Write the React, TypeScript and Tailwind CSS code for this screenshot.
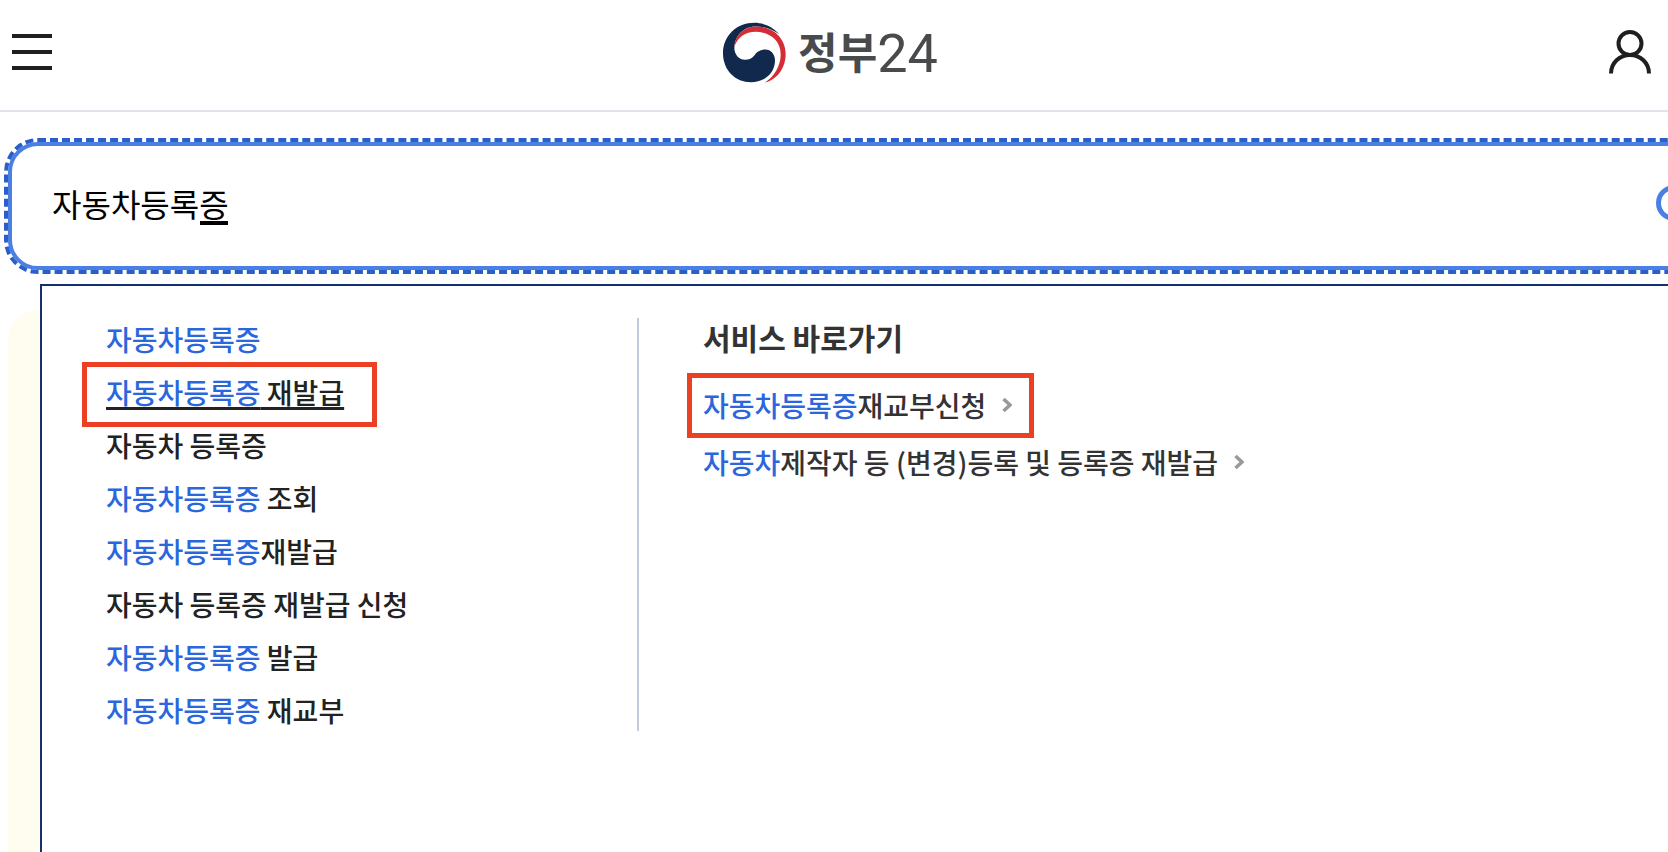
import { useState } from 'react'

type Suggestion = {
  match?: string
  rest: string
  selected?: boolean
}

type Service = {
  match: string
  rest: string
  marked?: boolean
}

const suggestions: Suggestion[] = [
  { match: '자동차등록증', rest: '' },
  { match: '자동차등록증', rest: ' 재발급', selected: true },
  { rest: '자동차 등록증' },
  { match: '자동차등록증', rest: ' 조회' },
  { match: '자동차등록증', rest: '재발급' },
  { rest: '자동차 등록증 재발급 신청' },
  { match: '자동차등록증', rest: ' 발급' },
  { match: '자동차등록증', rest: ' 재교부' },
]

const services: Service[] = [
  { match: '자동차등록증', rest: '재교부신청', marked: true },
  { match: '자동차', rest: '제작자 등 (변경)등록 및 등록증 재발급' },
]

function Emblem() {
  return (
    <svg viewBox="0 0 189 182" className="h-[61px] w-[63px]" aria-hidden>
      <path
        fill="#10294d"
        d="M168 36C150 14 120 2 95 2C40 2 0 42 0 93C0 145 38 180 84 180C128 180 156 150 156 115C156 96 143 82 127 82C112 82 100 90 94 100C88 108 78 113 66 113C48 113 34 98 34 76C36 40 62 13 98 13C128 13 150 22 168 36Z"
      />
      <path
        fill="#d42d35"
        d="M34 76C36 38 64 13 100 13C150 13 188 48 188 95C188 140 160 174 126 181C154 162 173 132 173 96C173 55 140 29 98 29C68 29 42 46 34 76Z"
      />
    </svg>
  )
}

function Header() {
  return (
    <header className="flex h-28 items-center justify-between border-b-2 border-[#dfe4ea] pr-[17px] pb-1.5 pl-3">
      <button type="button" aria-label="전체 메뉴" className="flex w-10 flex-col gap-3">
        <span className="h-1 w-full bg-[#1f1f1f]" />
        <span className="h-1 w-full bg-[#1f1f1f]" />
        <span className="h-1 w-full bg-[#1f1f1f]" />
      </button>

      <a href="#" className="flex items-center gap-3 text-[#484a4c]">
        <Emblem />
        <span className="flex items-center leading-[60px]">
          <span className="pb-1 text-[43px] font-bold">정부</span>
          <span className="pt-1 font-['Roboto',sans-serif] text-[54px]">24</span>
        </span>
      </a>

      <button type="button" aria-label="로그인">
        <svg
          viewBox="0 0 42 44"
          fill="none"
          stroke="#1f1f1f"
          strokeWidth="4"
          className="h-11 w-[42px]"
          aria-hidden
        >
          <circle cx="21" cy="13.5" r="11.5" />
          <path d="M2 43.5C2 33 10.5 25 21 25S40 33 40 43.5" />
        </svg>
      </button>
    </header>
  )
}

function SearchBox() {
  const [query, setQuery] = useState('자동차등록증')

  return (
    <form
      role="search"
      className="-mr-16 ml-2 flex h-32 items-center justify-between rounded-[30px] border-4 border-[#4a80e4] pr-9 pb-1.5 pl-10 outline-4 outline-[#2a5fc9] outline-dashed"
      onSubmit={(e) => e.preventDefault()}
    >
      <div className="relative flex-1">
        <input
          type="text"
          aria-label="검색어"
          value={query}
          onChange={(e) => setQuery(e.target.value)}
          className="block h-12 w-full bg-transparent text-[32px] leading-[48px] text-black outline-none"
        />
        <span className="absolute bottom-0.5 left-[148px] h-1 w-7 bg-black" aria-hidden />
      </div>
      <button type="submit" aria-label="검색">
        <svg
          viewBox="0 0 36 36"
          fill="none"
          stroke="#4a80e4"
          strokeWidth="5"
          className="size-9 overflow-visible"
          aria-hidden
        >
          <circle cx="18" cy="18" r="15.5" />
          <path d="M29 29L40 40" />
        </svg>
      </button>
    </form>
  )
}

function SuggestionList() {
  return (
    <ul className="flex w-[533px] shrink-0 flex-col gap-[11px] border-r-2 border-[#c4cadd] text-[28px] leading-[42px] font-medium text-[#222]">
      {suggestions.map((item, i) => (
        <li key={i} className="relative">
          <a
            href="#"
            className={
              item.selected
                ? 'underline decoration-[3px] underline-offset-3 [text-decoration-skip-ink:none]'
                : undefined
            }
          >
            {item.match && <span className="text-[#2a67dc]">{item.match}</span>}
            {item.rest}
          </a>
          {item.selected && (
            <span
              className="pointer-events-none absolute -top-[9px] -left-6 h-[65px] w-[295px] border-[5px] border-[#ec4024]"
              aria-hidden
            />
          )}
        </li>
      ))}
    </ul>
  )
}

function ServiceLinks() {
  return (
    <section className="text-[#333]">
      <h2 className="mb-7 text-[30px] leading-[38px] font-bold">서비스 바로가기</h2>
      <ul className="flex flex-col gap-[15px] text-[28px] leading-[42px] font-medium">
        {services.map((service) => (
          <li key={service.rest} className="relative">
            <a href="#" className="flex items-center gap-4">
              <span>
                <span className="text-[#2a67dc]">{service.match}</span>
                {service.rest}
              </span>
              <svg
                viewBox="0 0 10 16"
                fill="none"
                stroke="#999"
                strokeWidth="3.5"
                className="h-4 w-[10px]"
                aria-hidden
              >
                <path d="M1.5 2L8 8L1.5 14" />
              </svg>
            </a>
            {service.marked && (
              <span
                className="pointer-events-none absolute -top-[11px] -left-4 h-[65px] w-[347px] border-[5px] border-[#ec4024]"
                aria-hidden
              />
            )}
          </li>
        ))}
      </ul>
    </section>
  )
}

export default function App() {
  return (
    <div className="flex h-screen flex-col overflow-hidden bg-white font-['Noto_Sans_CJK_KR',sans-serif]">
      <Header />
      <main className="flex flex-1 flex-col pt-[30px]">
        <SearchBox />
        <div className="relative flex flex-1 flex-col pt-10">
          <div className="-mr-16 ml-2 flex-1 rounded-tl-[30px] bg-[#fffdf0]" />
          {/* Autocomplete layer, drawn over the banner below the search box */}
          <div className="absolute top-[14px] -right-16 -bottom-4 left-10 flex items-start gap-16 border-2 border-[#15306f] bg-white pt-8 pl-16">
            <SuggestionList />
            <ServiceLinks />
          </div>
        </div>
      </main>
    </div>
  )
}
